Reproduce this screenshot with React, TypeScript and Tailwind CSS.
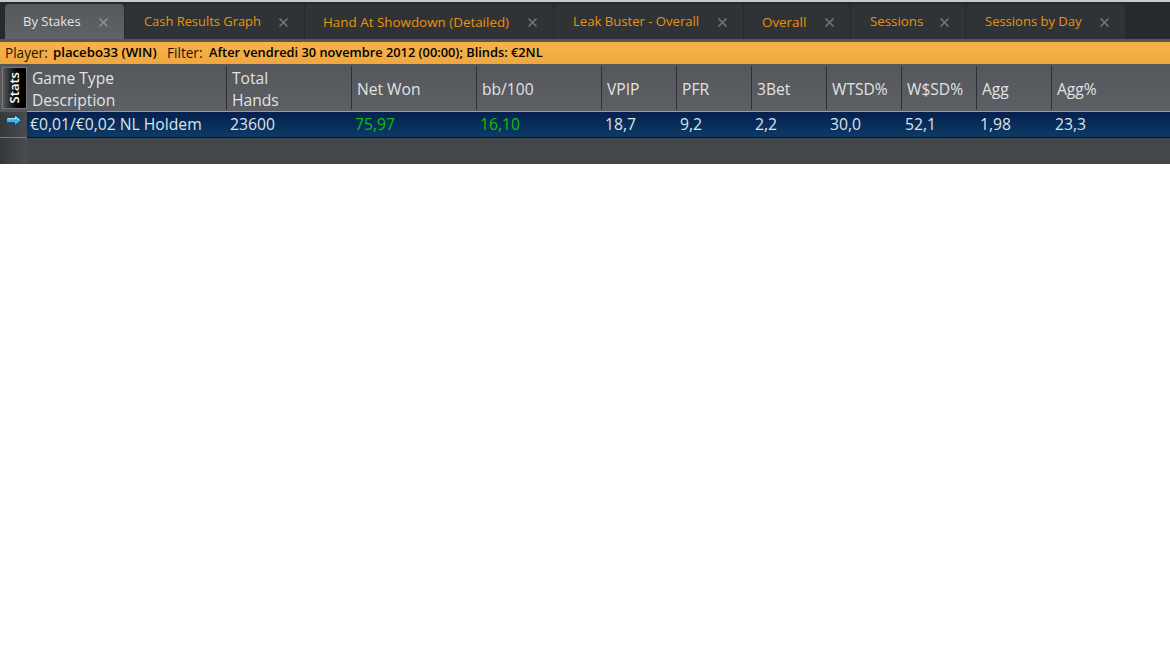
import React from "react";

const tabs = [
  { title: "Cash Results Graph", width: "w-[179px]", pad: "pl-[19px]", size: "text-[12.9px]" },
  { title: "Hand At Showdown (Detailed)", width: "w-[248px]", pad: "pl-[18px]", size: "text-[13.4px]" },
  { title: "Leak Buster - Overall", width: "w-[189px]", pad: "pl-[19px]", size: "text-[13.1px]" },
  { title: "Overall", width: "w-[106px]", pad: "pl-[18px]", size: "text-[13.4px]" },
  { title: "Sessions", width: "w-[114px]", pad: "pl-[19px]", size: "text-[13.3px]" },
  { title: "Sessions by Day", width: "w-[159px]", pad: "pl-[19px]", size: "text-[13px]" },
];

const columns = [
  { head: ["Game Type", "Description"], value: "€0,01/€0,02 NL Holdem", width: "w-[200px]" },
  { head: ["Total", "Hands"], value: "23600", width: "w-[125px]" },
  { head: ["Net Won"], value: "75,97", width: "w-[125px]", green: true },
  { head: ["bb/100"], value: "16,10", width: "w-[125px]", green: true },
  { head: ["VPIP"], value: "18,7", width: "w-[75px]" },
  { head: ["PFR"], value: "9,2", width: "w-[75px]" },
  { head: ["3Bet"], value: "2,2", width: "w-[75px]" },
  { head: ["WTSD%"], value: "30,0", width: "w-[75px]" },
  { head: ["W$SD%"], value: "52,1", width: "w-[75px]" },
  { head: ["Agg"], value: "1,98", width: "w-[75px]" },
  { head: ["Agg%"], value: "23,3", width: "flex-1" },
];

const CloseIcon = ({ className }: { className?: string }) => (
  <svg width="9" height="9" viewBox="0 0 9 9" className={className}>
    <path d="M0.5 0.5L8.5 8.5M8.5 0.5L0.5 8.5" stroke="currentColor" strokeWidth="1.5" fill="none" />
  </svg>
);

const ArrowIcon = () => (
  <svg width="16" height="13" viewBox="0 0 16 13">
    <path
      d="M0.5 3.5H8.5V0.5L15.5 6.2L8.5 12V8.8H0.5Z"
      fill="#3fb0ea"
      stroke="#173f5e"
      strokeWidth="1"
    />
    <path d="M1.5 4.7H9.7V3L13 5.8" stroke="#c4ecfc" strokeWidth="1" fill="none" />
  </svg>
);

export default function App() {
  return (
    <div className="min-h-[648px] bg-white font-['Open_Sans','Noto_Sans',sans-serif]">
      {/* Tab strip */}
      <div className="h-[2px] bg-[#c6cad0]" />
      <div className="flex h-[37px] items-end bg-[#272a2d] pl-[5px]">
        <div className="flex h-[35px] w-[119px] items-center rounded-t-[4px] bg-gradient-to-b from-[#55585c] to-[#5f6266] pt-[1px] pr-[16px] pl-[18px] text-[13px] text-[#e4e4e4]">
          <span>By Stakes</span>
          <CloseIcon className="ml-auto text-[#8f9295]" />
        </div>
        {tabs.map((tab) => (
          <div
            key={tab.title}
            className={`${tab.width} ${tab.pad} ${tab.size} ml-[1px] flex h-[35px] shrink-0 items-center rounded-t-[4px] bg-[#303336] pt-[1px] pr-[16px] whitespace-nowrap text-[#ea920c]`}
          >
            <span>{tab.title}</span>
            <CloseIcon className="ml-auto text-[#74777a]" />
          </div>
        ))}
      </div>

      <div className="h-[3px] bg-[#54575b]" />

      {/* Filter bar */}
      <div className="flex h-[22px] items-center bg-gradient-to-b from-[#f7b24a] to-[#efa840] pl-[5px] text-[13.6px] whitespace-nowrap text-[#1c1408]">
        <span className="w-[48px]">Player:</span>
        <span className="w-[114px] text-[13.2px] font-semibold text-black">placebo33 (WIN)</span>
        <span className="w-[42px]">Filter:</span>
        <span className="text-[12.8px] font-semibold text-black">After vendredi 30 novembre 2012 (00:00); Blinds: €2NL</span>
      </div>

      <div className="h-[2px] bg-[#54575b]" />

      {/* Grid */}
      <div className="flex h-[98px]">
        <div className="flex w-[27px] shrink-0 flex-col bg-gradient-to-r from-[#35383b] to-[#4a4d50]">
          <div className="h-[46px] bg-[#55585c] pt-[1px] pl-[2px]">
            <div className="flex h-[42px] w-[25px] items-center justify-center border border-[#777a7d] bg-gradient-to-r from-[#5a5a5a] via-[#111] to-[#000]">
              <span className="rotate-[-90deg] text-[13px] font-semibold text-white">Stats</span>
            </div>
          </div>
          <div className="flex h-[26px] items-start border-b border-[#77797c] pt-[2px] pl-[6px]">
            <ArrowIcon />
          </div>
        </div>

        <div className="flex min-w-0 flex-1 flex-col bg-[#43464a]">
          <div className="flex h-[45px] bg-gradient-to-b from-[#54575b] to-[#5c5f63] text-[#e2e2e2]">
            {columns.map((col) => (
              <div
                key={col.head[0]}
                className={`${col.width} flex h-[44px] flex-col justify-center border-r border-[#2e3033] pt-[2px] pl-[5px] text-[15.6px] leading-[22px] last:border-r-0`}
              >
                {col.head.map((line) => (
                  <span key={line}>{line}</span>
                ))}
              </div>
            ))}
          </div>
          <div className="h-[1px] bg-[#9a9da0]" />
          <div className="flex h-[26px] items-center border-b border-[#0a0f18] bg-gradient-to-b from-[#05204f] to-[#0f3a66] text-[15.7px]">
            {columns.map((col) => (
              <div
                key={col.head[0]}
                className={`${col.width} pl-[3px] whitespace-nowrap ${col.green ? "text-[#0cc00c]" : "text-[#dfe3e7]"}`}
              >
                {col.value}
              </div>
            ))}
          </div>
        </div>
      </div>
    </div>
  );
}
